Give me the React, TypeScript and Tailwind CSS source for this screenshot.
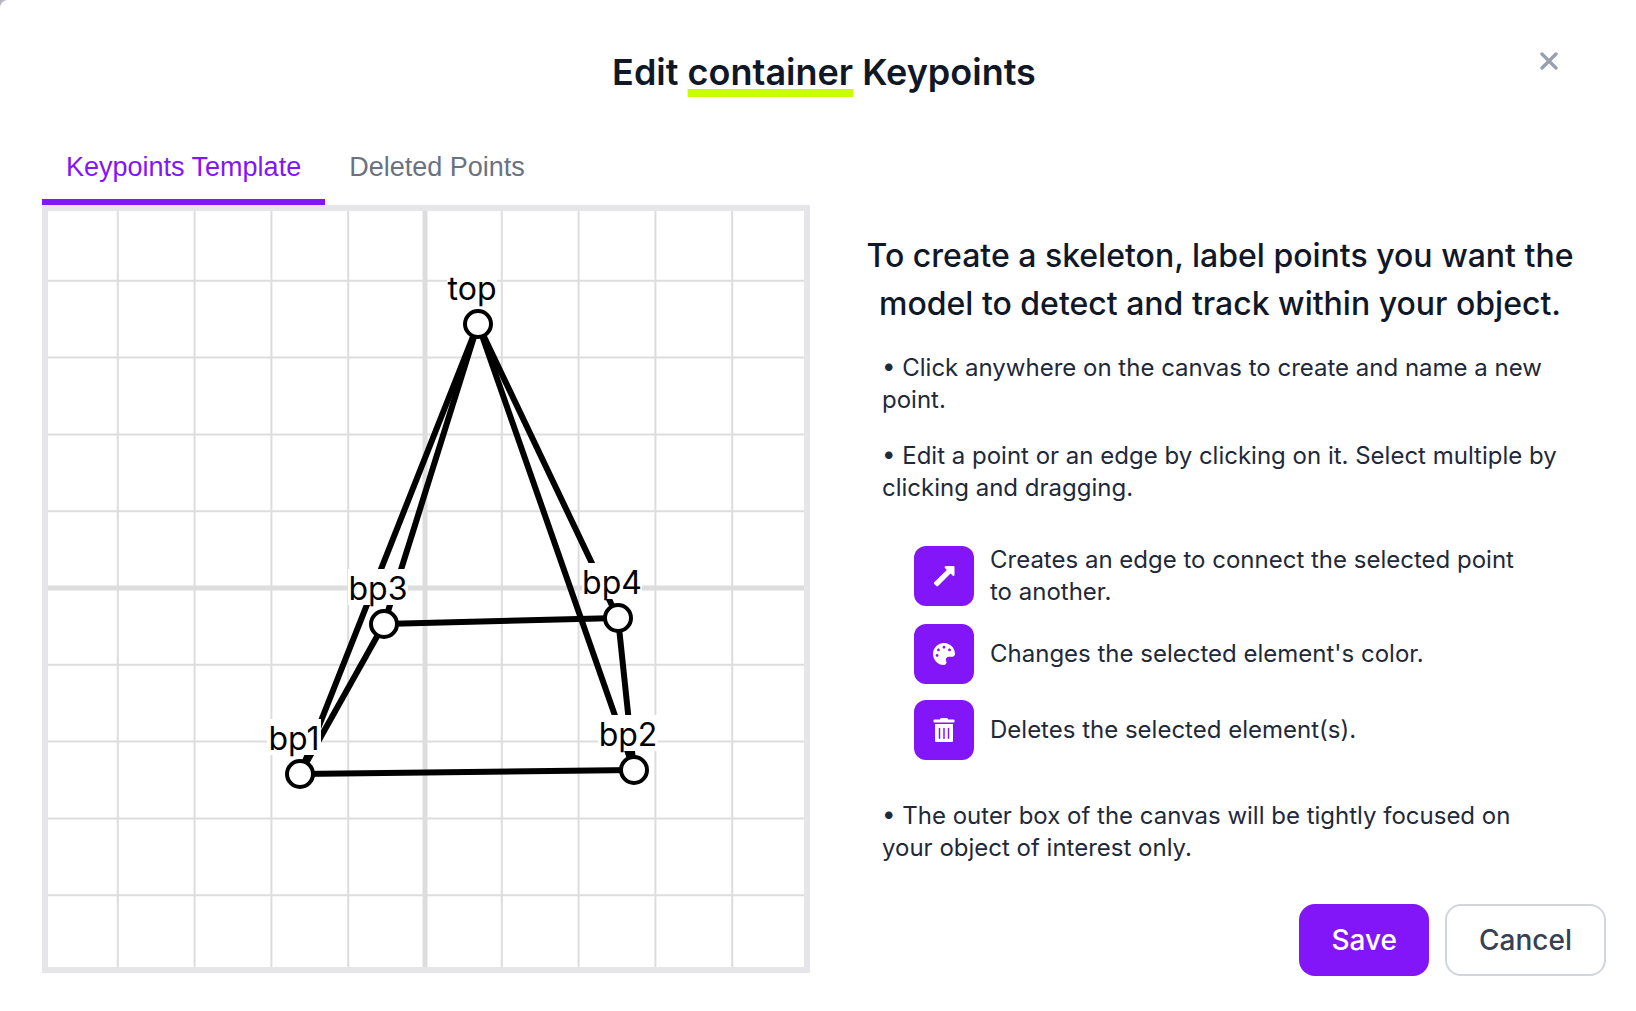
import React, { useState } from "react";

type Point = { id: string; x: number; y: number; labelWidth: number };

const points: Point[] = [
  { id: "top", x: 430, y: 113, labelWidth: 50 },
  { id: "bp1", x: 252, y: 563, labelWidth: 54 },
  { id: "bp2", x: 586, y: 559, labelWidth: 60 },
  { id: "bp3", x: 336, y: 413, labelWidth: 60 },
  { id: "bp4", x: 570, y: 407, labelWidth: 60 },
];

const edges: [string, string][] = [
  ["top", "bp1"],
  ["top", "bp2"],
  ["top", "bp3"],
  ["top", "bp4"],
  ["bp1", "bp2"],
  ["bp1", "bp3"],
  ["bp2", "bp4"],
  ["bp3", "bp4"],
];

const find = (id: string) => points.find((p) => p.id === id)!;
const gridSteps = [-4, -3, -2, -1, 1, 2, 3, 4];
const CENTER = 377;
const PITCH = 76.8;

function SkeletonCanvas() {
  return (
    <svg viewBox="0 0 756 756" className="block w-full" role="img" aria-label="Keypoint skeleton">
      <g stroke="#dddddd" strokeWidth="2">
        {gridSteps.map((s) => (
          <React.Fragment key={s}>
            <line x1={CENTER + s * PITCH} x2={CENTER + s * PITCH} y1="0" y2="756" />
            <line y1={CENTER + s * PITCH} y2={CENTER + s * PITCH} x1="0" x2="756" />
          </React.Fragment>
        ))}
      </g>
      <g stroke="#dddddd" strokeWidth="5">
        <line x1={CENTER} x2={CENTER} y1="0" y2="756" />
        <line y1={CENTER} y2={CENTER} x1="0" x2="756" />
      </g>
      <g stroke="#000000" strokeWidth="6">
        {edges.map(([a, b]) => (
          <line key={a + b} x1={find(a).x} y1={find(a).y} x2={find(b).x} y2={find(b).y} />
        ))}
      </g>
      {points.map((p) => (
        <g key={p.id}>
          <rect x={p.x - 6 - p.labelWidth / 2} y={p.y - 55} width={p.labelWidth} height="36" fill="#ffffff" />
          <text x={p.x - 6} y={p.y - 24} textAnchor="middle" className="font-['Inter',sans-serif] text-[32px]">
            {p.id}
          </text>
        </g>
      ))}
      {points.map((p) => (
        <circle key={p.id} cx={p.x} cy={p.y} r="13" fill="#ffffff" stroke="#000000" strokeWidth="4" />
      ))}
    </svg>
  );
}

function ArrowIcon() {
  return (
    <svg viewBox="0 0 22 22" className="size-[22px]" fill="currentColor" aria-hidden="true">
      <path d="M13 1h7.500a1 1 0 0 1 1 1v8a1 1 0 0 1-1.700.7L17.500 8.500 5 21a1.200 1.200 0 0 1-1.700 0L1.200 19a1.200 1.200 0 0 1 0-1.700L13.800 5 12.200 3.200A1.200 1.200 0 0 1 13 1z" />
    </svg>
  );
}

function PaletteIcon() {
  return (
    <svg viewBox="0 0 512 512" className="size-[22px]" fill="currentColor" aria-hidden="true">
      <path d="M204.300 5C104.900 24.400 24.800 104.300 5.200 203.400c-37 187 131.700 326.400 258.800 306.700 41.200-6.400 61.400-54.600 42.500-91.700-23.100-45.400 9.900-98.400 60.900-98.400h79.700c35.800 0 64.800-29.600 64.900-65.300C511.500 97.100 368.100-26.900 204.300 5zM96 320c-17.700 0-32-14.300-32-32s14.300-32 32-32 32 14.300 32 32-14.300 32-32 32zm32-128c-17.700 0-32-14.300-32-32s14.300-32 32-32 32 14.300 32 32-14.300 32-32 32zm128-64c-17.700 0-32-14.300-32-32s14.300-32 32-32 32 14.300 32 32-14.300 32-32 32zm128 64c-17.700 0-32-14.300-32-32s14.300-32 32-32 32 14.300 32 32-14.300 32-32 32z" />
    </svg>
  );
}

function TrashIcon() {
  return (
    <svg viewBox="0 0 448 512" className="h-6 w-[22px]" fill="currentColor" aria-hidden="true">
      <path d="M32 488a24 24 0 0 0 24 24h336a24 24 0 0 0 24-24V128H32zm272-264a16 16 0 0 1 32 0v208a16 16 0 0 1-32 0zm-96 0a16 16 0 0 1 32 0v208a16 16 0 0 1-32 0zm-96 0a16 16 0 0 1 32 0v208a16 16 0 0 1-32 0zM432 32H312l-9.400-18.700A24 24 0 0 0 281.100 0H166.800a23.700 23.700 0 0 0-21.400 13.300L136 32H16A16 16 0 0 0 0 48v32a16 16 0 0 0 16 16h416a16 16 0 0 0 16-16V48a16 16 0 0 0-16-16z" />
    </svg>
  );
}

function Tool({ icon, label, children }: { icon: React.ReactNode; label: string; children: React.ReactNode }) {
  return (
    <li className="flex items-center gap-4">
      <button
        type="button"
        aria-label={label}
        className="flex size-15 shrink-0 items-center justify-center rounded-xl bg-[#8315f9] text-white"
      >
        {icon}
      </button>
      <span>{children}</span>
    </li>
  );
}

export default function App() {
  const [tab, setTab] = useState("template");
  const tabBase = "border-b-6 px-6 pt-5 pb-4 font-['Liberation_Sans',sans-serif] text-[27px] leading-8";
  const active = `${tabBase} border-[#8315f9] text-[#8315f9]`;
  const idle = `${tabBase} border-transparent text-gray-500`;

  return (
    <div className="min-h-screen bg-[#b5b5be]">
      <main
        role="dialog"
        aria-labelledby="dialog-title"
        className="min-h-screen rounded-tl-lg bg-white px-[42px] pt-12 pb-8 font-['Inter',sans-serif] text-gray-900"
      >
        <header className="grid grid-cols-[1fr_auto_1fr] items-start pl-3">
          <h1 id="dialog-title" className="col-start-2 text-4xl leading-12 font-semibold">
            Edit{" "}
            <span className="underline decoration-[#c8ff00] decoration-8 underline-offset-4">container</span>{" "}
            Keypoints
          </h1>
          <button type="button" aria-label="Close" className="mr-8 justify-self-end p-1 text-gray-400">
            <svg viewBox="0 0 18 18" className="size-[18px]" fill="none" stroke="currentColor" strokeWidth="3.400" strokeLinecap="round">
              <path d="M2 2l14 14M16 2L2 16" />
            </svg>
          </button>
        </header>

        <div className="mt-[35px] flex" role="tablist">
          <button type="button" role="tab" aria-selected={tab === "template"} onClick={() => setTab("template")} className={tab === "template" ? active : idle}>
            Keypoints Template
          </button>
          <button type="button" role="tab" aria-selected={tab === "deleted"} onClick={() => setTab("deleted")} className={tab === "deleted" ? active : idle}>
            Deleted Points
          </button>
        </div>

        <div className="grid grid-cols-2">
          <section className="mr-2 self-start border-6 border-[#e5e5ea]">
            <SkeletonCanvas />
          </section>

          <section className="-mr-3 flex flex-col pl-10">
            <h2 className="mt-[27px] mr-6 text-center text-[32px] leading-12 font-medium">
              To create a skeleton, label points you want the model to detect and track within your object.
            </h2>
            <div className="mt-6 pr-11 pl-6 text-2xl leading-8 text-gray-800">
              <p>• Click anywhere on the canvas to create and name a new point.</p>
              <p className="mt-6">• Edit a point or an edge by clicking on it. Select multiple by clicking and dragging.</p>
              <ul className="my-10 flex flex-col gap-4 px-8">
                <Tool icon={<ArrowIcon />} label="Create edge">
                  Creates an edge to connect the selected point to another.
                </Tool>
                <Tool icon={<PaletteIcon />} label="Change color">
                  Changes the selected element's color.
                </Tool>
                <Tool icon={<TrashIcon />} label="Delete">
                  Deletes the selected element(s).
                </Tool>
              </ul>
              <p>• The outer box of the canvas will be tightly focused on your object of interest only.</p>
            </div>
            <div className="mt-10 flex justify-end gap-4 text-[28px] leading-10 font-medium">
              <button type="button" className="rounded-2xl bg-[#8315f9] px-8 py-4 text-white">
                Save
              </button>
              <button type="button" className="rounded-2xl border-2 border-gray-300 px-8 text-gray-700">
                Cancel
              </button>
            </div>
          </section>
        </div>
      </main>
    </div>
  );
}
